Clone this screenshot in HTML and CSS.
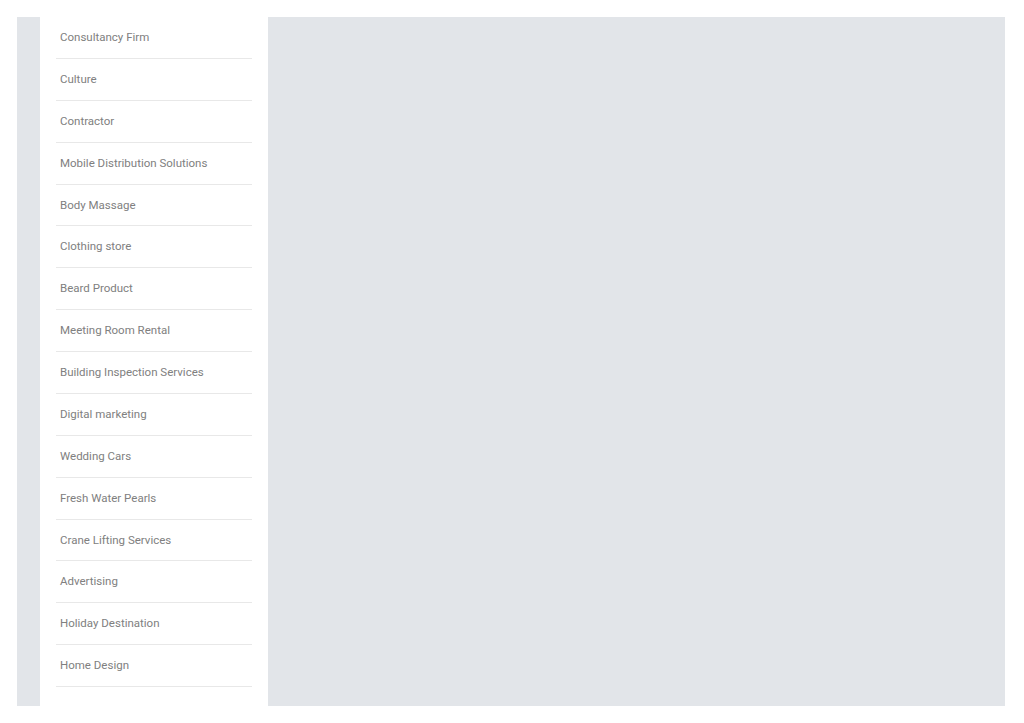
FILE: index.html
```html
<!DOCTYPE html>
<html lang="en">
<head>
    <meta charset="UTF-8">
    <meta name="viewport" content="width=device-width, initial-scale=1.0">
    <title>Categories</title>
    <link rel="stylesheet" href="styles.css">
</head>
<body>
    <div class="layout">
        <aside class="sidebar">
            <ul class="category-list">
                <li class="category">Consultancy Firm</li>
                <li class="category">Culture</li>
                <li class="category">Contractor</li>
                <li class="category">Mobile Distribution Solutions</li>
                <li class="category">Body Massage</li>
                <li class="category">Clothing store</li>
                <li class="category">Beard Product</li>
                <li class="category">Meeting Room Rental</li>
                <li class="category">Building Inspection Services</li>
                <li class="category">Digital marketing</li>
                <li class="category">Wedding Cars</li>
                <li class="category">Fresh Water Pearls</li>
                <li class="category">Crane Lifting Services</li>
                <li class="category">Advertising</li>
                <li class="category">Holiday Destination</li>
                <li class="category">Home Design</li>
            </ul>
        </aside>
        <main class="content"></main>
    </div>
</body>
</html>
```

FILE: styles.css
```css
body {
    margin: 0;
    background-color: #ffffff;
    font-family: Roboto, "Liberation Sans", sans-serif;
}

.layout {
    display: flex;
    height: 689px;
    margin: 17px 19px 17px 17px;
    padding-left: 23px;
    background-color: #e2e5e9;
}

.sidebar {
    width: 228px;
    background-color: #ffffff;
}

.category-list {
    list-style: none;
    margin: 0;
    padding: 0 16px;
}

.category {
    padding: 13px 4px;
    line-height: 14.87px;
    font-size: 11.5px;
    color: #808080;
    border-bottom: 1px solid #e8e8e8;
}

.content {
    flex: 1;
}
```
